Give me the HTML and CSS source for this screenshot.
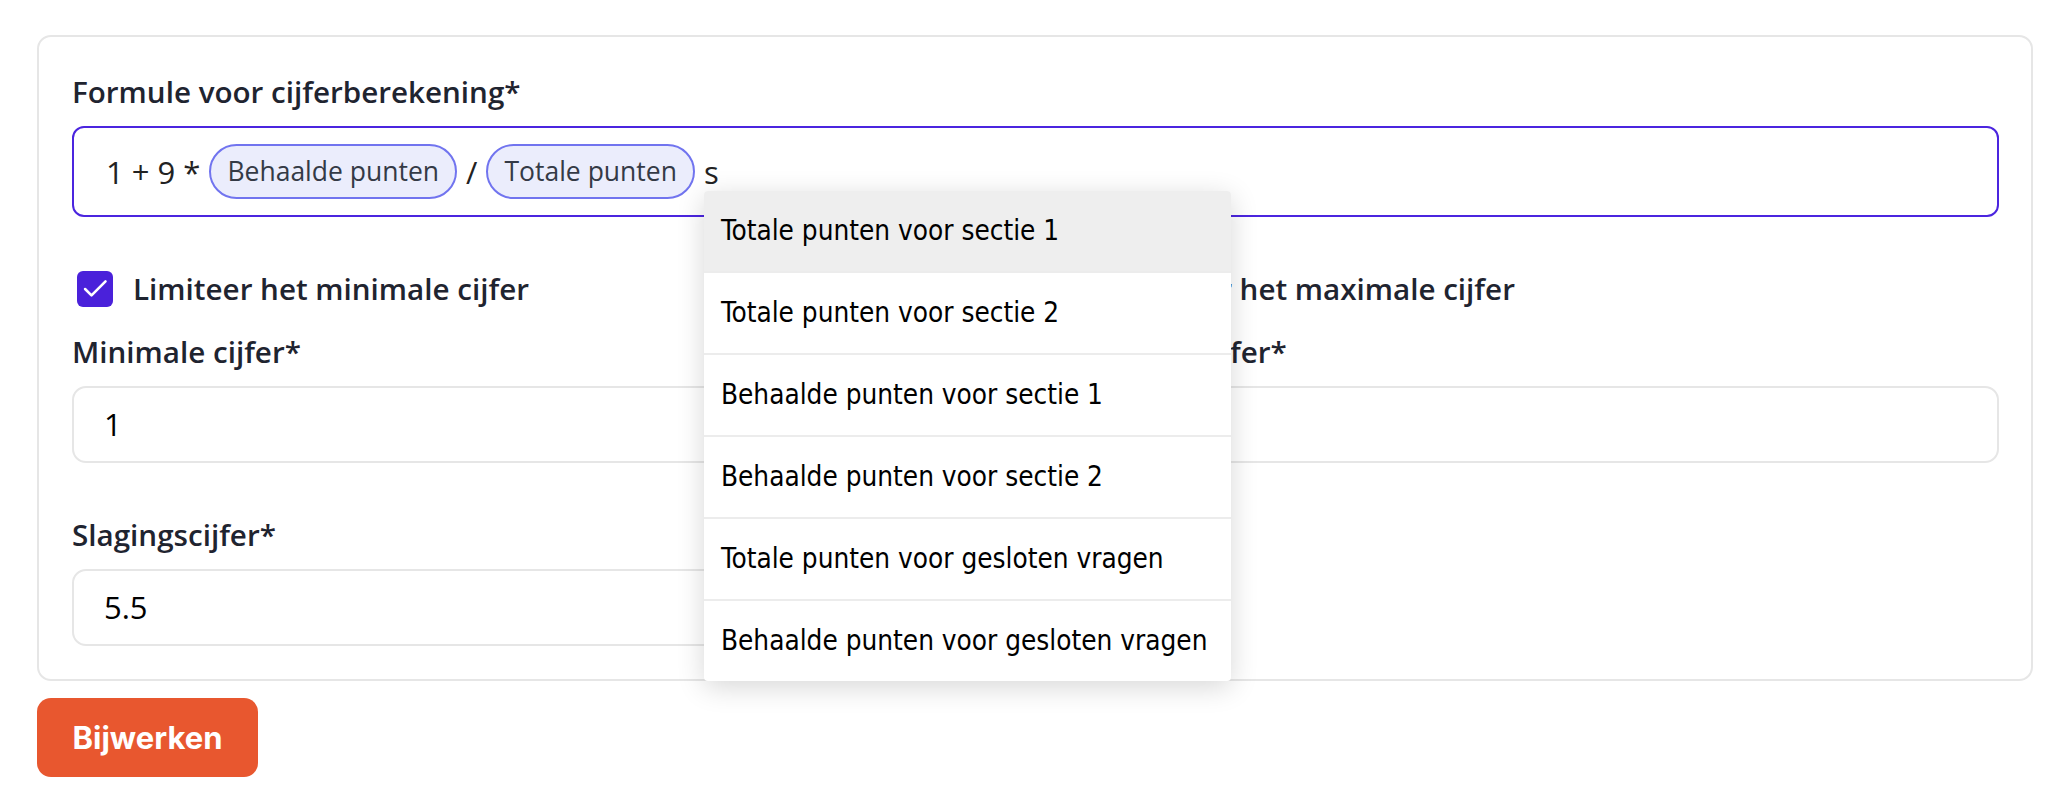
FILE: index.html
```html
<!DOCTYPE html>
<html lang="nl">
<head>
  <meta charset="UTF-8">
  <title>Cijferberekening</title>
  <link rel="stylesheet" href="styles.css">
</head>
<body>
  <div class="page">
    <div class="card">
      <label class="label">Formule voor cijferberekening*</label>
      <div class="formula">
        <span class="token">1 + 9 *</span>
        <span class="chip">Behaalde punten</span>
        <span class="token">/</span>
        <span class="chip">Totale punten</span>
        <span class="caret">s
          <ul class="suggest">
            <li class="active">Totale punten voor sectie 1</li>
            <li>Totale punten voor sectie 2</li>
            <li>Behaalde punten voor sectie 1</li>
            <li>Behaalde punten voor sectie 2</li>
            <li>Totale punten voor gesloten vragen</li>
            <li>Behaalde punten voor gesloten vragen</li>
          </ul>
        </span>
      </div>

      <div class="grid">
        <div class="col">
          <div class="check-row">
            <span class="checkbox">
              <svg viewBox="0 0 24 24" width="28" height="28"><path d="M3.5 12l5.5 5.5L21 5.5" fill="none" stroke="#fff" stroke-width="2.2" stroke-linecap="round" stroke-linejoin="round"/></svg>
            </span>
            <span class="check-label">Limiteer het minimale cijfer</span>
          </div>
          <label class="label">Minimale cijfer*</label>
          <div class="input">1</div>
        </div>
        <div class="col">
          <div class="check-row">
            <span class="checkbox">
              <svg viewBox="0 0 24 24" width="28" height="28"><path d="M3.5 12l5.5 5.5L21 5.5" fill="none" stroke="#fff" stroke-width="2.2" stroke-linecap="round" stroke-linejoin="round"/></svg>
            </span>
            <span class="check-label">Limiteer het maximale cijfer</span>
          </div>
          <label class="label">Maximale cijfer*</label>
          <div class="input">10</div>
        </div>
        <div class="col pass">
          <label class="label">Slagingscijfer*</label>
          <div class="input">5.5</div>
        </div>
      </div>
    </div>
    <button class="btn">Bijwerken</button>
  </div>
</body>
</html>
```

FILE: styles.css
```css
body {
  margin: 0;
  background: #fff;
  font-family: "Open Sans", sans-serif;
  color: #1f2430;
}

.page {
  padding: 35px 19px 30px 37px;
}

.card {
  border: 2px solid #e6e6e6;
  border-radius: 14px;
  padding: 34px 32px 33px 33px;
}

.label {
  display: block;
  font-size: 29.6px;
  line-height: 42px;
  font-weight: 600;
  margin-bottom: 13px;
}

.formula {
  display: flex;
  align-items: center;
  gap: 9px;
  border: 2px solid #4b25df;
  border-radius: 12px;
  padding: 16px 32px;
  font-size: 31px;
  line-height: 42px;
  color: #222;
}

.chip {
  display: inline-block;
  background: #ebedfc;
  border: 2px solid #7174ef;
  border-radius: 28px;
  padding: 0 16px;
  height: 51px;
  line-height: 51px;
  font-size: 26.5px;
  color: #343a46;
}

.caret {
  position: relative;
}

.suggest {
  position: absolute;
  left: 0;
  top: 40px;
  width: 527px;
  margin: 0;
  padding: 0;
  list-style: none;
  background: #fff;
  border-radius: 4px;
  box-shadow: 0 6px 28px rgba(0, 0, 0, 0.16);
  font-family: "DejaVu Sans Condensed", "DejaVu Sans", sans-serif;
  font-stretch: condensed;
  font-size: 27.7px;
  color: #000;
  z-index: 5;
}

.suggest li {
  height: 80px;
  line-height: 80px;
  padding-left: 17px;
  white-space: nowrap;
  border-bottom: 2px solid #ececec;
}

.suggest li:last-child {
  border-bottom: none;
}

.suggest li.active {
  background: #eeeeee;
  border-radius: 4px 4px 0 0;
}

.grid {
  display: grid;
  grid-template-columns: 1fr 1fr;
  column-gap: 32px;
  margin-top: 51px;
}

.check-row {
  display: flex;
  align-items: center;
  gap: 20px;
  margin-left: 5px;
  margin-bottom: 21px;
  height: 42px;
}

.checkbox {
  width: 36px;
  height: 36px;
  border-radius: 6px;
  background: #4a21da;
  display: flex;
  align-items: center;
  justify-content: center;
}

.check-label {
  font-size: 29.6px;
  line-height: 42px;
  font-weight: 600;
}

.input {
  border: 2px solid #e6e6e6;
  border-radius: 14px;
  height: 73px;
  line-height: 73px;
  padding-left: 30px;
  font-size: 31px;
  color: #000;
  margin-bottom: 51px;
}

.pass .input {
  margin-bottom: 0;
}

.btn {
  display: block;
  margin-top: 17px;
  width: 221px;
  height: 79px;
  border: none;
  border-radius: 14px;
  background: #e8572f;
  color: #fff;
  font-family: "Inter", sans-serif;
  font-weight: 700;
  font-size: 31px;
}
```
